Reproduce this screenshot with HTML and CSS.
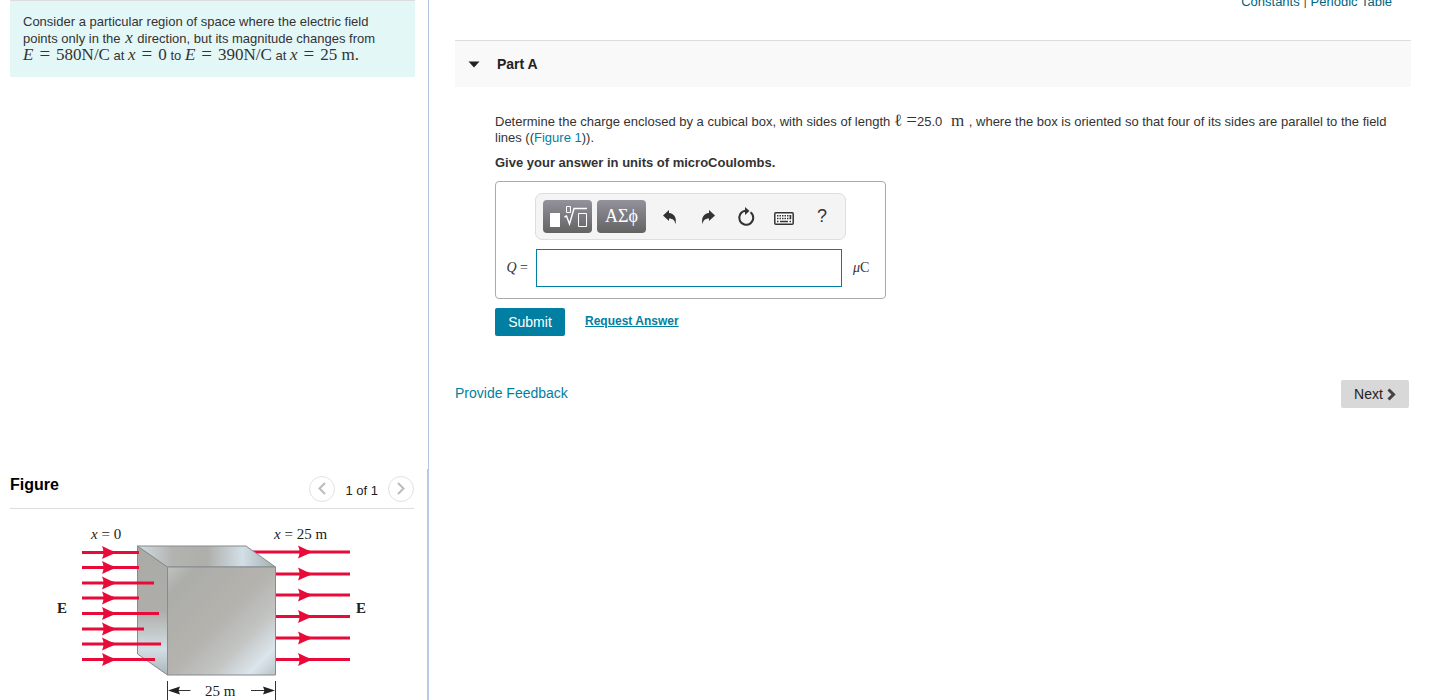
FILE: index.html
```html
<!DOCTYPE html>
<html lang="en">
<head>
<meta charset="utf-8">
<title>Part A</title>
<link rel="stylesheet" href="styles.css">
</head>
<body>
<div class="page">
  <aside class="side">
    <section class="intro-pane">
      <p class="intro">Consider a particular region of space where the electric field points only in the <span class="math var"><i>x</i></span> direction, but its magnitude changes from <span class="math"><i>E</i><span class="op">=</span>580N/C</span> at <span class="math"><i>x</i><span class="op">=</span>0</span> to <span class="math"><i>E</i><span class="op">=</span>390N/C</span> at <span class="math"><i>x</i><span class="op">=</span>25 m.</span></p>
    </section>
    <section class="figure-pane">
      <header class="figure-head">
        <h2 class="figure-title">Figure</h2>
        <nav class="pager">
          <button class="pager-btn" aria-label="Previous figure"><svg width="8" height="13" viewBox="0 0 8 13"><path d="M7 1L1.500 6.500L7 12"/></svg></button>
          <span class="pager-label">1 of 1</span>
          <button class="pager-btn" aria-label="Next figure"><svg width="8" height="13" viewBox="0 0 8 13"><path d="M1 1L6.500 6.500L1 12"/></svg></button>
        </nav>
      </header>
      <svg class="diagram" viewBox="10 509 404 202" role="img" aria-label="Cube in an electric field">
        <defs>
          <linearGradient id="front" x1="0" y1="0" x2="1" y2="1">
            <stop offset="0" stop-color="#c0c2c0"/><stop offset=".14" stop-color="#acada9"/><stop offset=".5" stop-color="#b5b3ae"/><stop offset=".7" stop-color="#c3c5c4"/><stop offset=".87" stop-color="#dce5eb"/><stop offset="1" stop-color="#b9c4c6"/>
          </linearGradient>
          <linearGradient id="top">
            <stop offset="0" stop-color="#d3dde2"/><stop offset=".25" stop-color="#b3b4b1"/><stop offset=".5" stop-color="#aeaeaa"/><stop offset=".76" stop-color="#d2dfe7"/><stop offset="1" stop-color="#a4afb0"/>
          </linearGradient>
          <linearGradient id="left" x1="0" y1="0" x2="0" y2="1">
            <stop offset="0" stop-color="#a9aaa6"/><stop offset=".5" stop-color="#aeada9"/><stop offset=".8" stop-color="#d3dfe5"/><stop offset="1" stop-color="#aab5b7"/>
          </linearGradient>
          <path id="head" d="M0-6.500Q9-2 15 0Q9 2 0 6.500Q3 0 0-6.500Z"/>
        </defs>
        <g class="field"><path d="M250 552H350"/></g>
        <g class="cube">
          <path fill="url(#left)" d="M137.500 546L167.500 567V675L137.500 654Z"/>
          <path fill="url(#top)" d="M137.500 546H246L275.500 567H167.500Z"/>
          <path fill="url(#front)" d="M167.500 567H275.500V675H167.500Z"/>
        </g>
        <g class="field">
          <path d="M82 552.500H139M82 567.500H139M82 583H154M82 598H139M82 613.500H159M82 629H144M82 644H161M82 659.500H155"/>
          <path d="M276 574H350M276 595H350M276 616.500H350M276 638H350M276 659.500H350"/>
        </g>
        <g fill="#e80a38">
          <use href="#head" x="102" y="552.500"/><use href="#head" x="102" y="567.500"/><use href="#head" x="102" y="583"/><use href="#head" x="102" y="598"/><use href="#head" x="102" y="613.500"/><use href="#head" x="102" y="629"/><use href="#head" x="102" y="644"/><use href="#head" x="102" y="659.500"/>
          <use href="#head" x="298" y="552"/><use href="#head" x="298" y="574"/><use href="#head" x="298" y="595"/><use href="#head" x="298" y="616.500"/><use href="#head" x="298" y="638"/><use href="#head" x="298" y="659.500"/>
        </g>
        <g stroke="#333"><path d="M167.500 681V705M275.500 681V705M176 690.500H190.500M251 690.500H266"/></g>
        <path fill="#222" d="M168 690.500L180 686.500L178.500 690.500L180 694.500ZM275 690.500L263 686.500L264.500 690.500L263 694.500Z"/>
        <g class="diagram-text">
          <text x="91" y="539"><tspan font-style="italic">x</tspan> = 0</text>
          <text x="274" y="539"><tspan font-style="italic">x</tspan> = 25 m</text>
          <text x="205" y="696">25 m</text>
          <text x="57" y="613" font-weight="bold">E</text>
          <text x="356" y="613" font-weight="bold">E</text>
        </g>
      </svg>
    </section>
  </aside>

  <main class="main">
    <div class="resources"><a href="#">Constants</a><span class="divider">|</span><a href="#">Periodic Table</a></div>
    <header class="part-head"><svg width="12" height="7" viewBox="0 0 12 7"><path fill="#222" d="M.5.5H11.500L6 6.500Z"/></svg><h1 class="part-title">Part A</h1></header>
    <div class="part-body">
      <p class="prompt">Determine the charge enclosed by a cubical box, with sides of length <span class="math">ℓ <span class="op-tight">=</span></span>25.0 <span class="math unit-m">m</span> , where the box is oriented so that four of its sides are parallel to the field lines ((<a href="#">Figure 1</a>)).</p>
      <p class="instruction">Give your answer in units of microCoulombs.</p>
      <form class="answer">
        <div class="toolbar">
          <button type="button" class="dark-btn" aria-label="Templates"><svg width="40" height="26" viewBox="0 0 40 26" fill="none" stroke="#fff"><path fill="#fff" stroke="none" d="M2 9H12V23H2Z"/><path d="M18.500 2.500H22.500V8.500H18.500ZM30.500 9.500H38.500V22.500H30.500Z"/><path stroke-width="1.400" d="M16.500 13L18.500 12L21.500 20L26 4.500H39"/></svg></button>
          <button type="button" class="dark-btn symbols">ΑΣϕ</button>
          <button type="button" class="icon-btn" aria-label="Undo"><svg width="16" height="16" viewBox="0 0 16 16"><path fill="#333" d="M1 6.500L7 1V4C12 4.500 15 8 13.500 15.500C13 11.500 11 9.500 7 9.500V12Z"/></svg></button>
          <button type="button" class="icon-btn" aria-label="Redo"><svg width="16" height="16" viewBox="0 0 16 16"><path fill="#333" d="M15 6.500L9 1V4C4 4.500 1 8 2.500 15.500C3 11.500 5 9.500 9 9.500V12Z"/></svg></button>
          <button type="button" class="icon-btn" aria-label="Reset"><svg width="20" height="20" viewBox="0 0 20 20"><path fill="none" stroke="#333" stroke-width="2" d="M14.500 5.200A7 7 0 1 1 9.500 3.800"/><path fill="#333" d="M9 0L13.500 4L9 8Z"/></svg></button>
          <button type="button" class="icon-btn" aria-label="Keyboard"><svg class="keyboard" width="20" height="13" viewBox="0 0 20 13"><rect x=".8" y=".8" width="18.400" height="11.400" rx="1" fill="#fff" stroke="#333" stroke-width="1.500"/><path stroke="#333" stroke-width="1.500" stroke-dasharray="1.500 1" d="M3 3.700H17M3 6.500H17"/><path stroke="#333" stroke-width="1.500" d="M3 9.500H4.500M6 9.500H14M15.500 9.500H17M16.500 3V7"/></svg></button>
          <button type="button" class="icon-btn help" aria-label="Help">?</button>
        </div>
        <label class="answer-label" for="charge"><i>Q</i> =</label>
        <input class="answer-input" id="charge" type="text">
        <span class="answer-unit"><i>μ</i>C</span>
      </form>
      <div class="actions"><button class="submit">Submit</button><a class="request" href="#">Request Answer</a></div>
    </div>
    <footer class="foot"><a class="feedback" href="#">Provide Feedback</a><button class="next">Next <svg width="9" height="13" viewBox="0 0 9 13"><path fill="none" stroke="#444" stroke-width="3" d="M1.500 1.500L6.500 6.500L1.500 11.500"/></svg></button></footer>
  </main>
</div>
</body>
</html>
```
FILE: styles.css
```css
* { box-sizing: border-box; }
body {
  margin: 0;
  color: #333;
  background: #fff;
  font: 13px/16px "Liberation Sans", Arial, sans-serif;
}
h1, h2, p { margin: 0; }
a { color: #007fa3; text-decoration: none; }
button { font-family: inherit; border: 0; padding: 0; cursor: pointer; }
svg { display: block; }
.page { display: flex; height: 100vh; overflow: hidden; }

.side { flex: 0 0 30%; display: flex; flex-direction: column; }
.intro-pane { flex: 67 0 0; min-height: 0; border-right: 1px solid #b0c6de; padding: 0 13px 0 10px; }
.intro {
  padding: 13px 36px 13px 13px;
  border-top: 1px solid #ddd;
  background: #e3f7f7;
}
.math { font-family: "Liberation Serif", serif; font-size: 17px; line-height: 12px; white-space: nowrap; }
.intro .math { line-height: 15px; }
.var { margin: 0 1px; }
.op { margin: 0 6px; font-size: 19px; line-height: 12px; }
.op-tight { font-size: 19px; }
.unit-m { margin: 0 1px 0 5px; }
.figure-pane {
  flex: 33 0 0;
  min-height: 0;
  overflow: hidden;
  border-right: 2px solid #b5cbe2;
  padding: 0 13px 0 10px;
}
.figure-head {
  display: flex;
  justify-content: space-between;
  align-items: center;
  height: 40px;
  border-bottom: 1px solid #ddd;
}
.figure-title { color: #000; font-size: 16px; line-height: 20px; padding-bottom: 8px; }
.pager { display: flex; align-items: center; gap: 10px; }
.pager-label { color: #222; padding-top: 4px; }
.pager-btn {
  display: grid;
  place-items: center;
  width: 26px;
  height: 26px;
  border: 1px solid #e2e2e2;
  border-radius: 50%;
  background: #fff;
}
.pager-btn path { fill: none; stroke: #bbb; stroke-width: 2; }
.diagram { width: 100%; }
.field { fill: none; stroke: #e80a38; stroke-width: 3; }
.cube { stroke: #858b8e; stroke-width: 1; stroke-linejoin: round; }
.diagram-text { font: 15px "Liberation Serif", serif; fill: #222; }

.main { flex: 1; min-width: 0; padding: 0 19px 0 26px; }
.resources {
  display: flex;
  justify-content: flex-end;
  align-items: flex-end;
  gap: 4px;
  height: 10px;
  padding-right: 19px;
}
.resources a { color: #00657f; }
.divider { font-size: 11px; }
.part-head {
  display: flex;
  align-items: center;
  gap: 17px;
  height: 47px;
  margin-top: 30px;
  padding-left: 13px;
  border-top: 1px solid #ddd;
  background: #f9f9f9;
}
.part-title { color: #222; font-size: 14px; line-height: 16px; }
.part-body { padding: 27px 20px 0 40px; }
.instruction { margin-top: 9px; font-weight: bold; }
.answer {
  display: grid;
  grid-template-columns: 32px 306px 30px;
  column-gap: 8px;
  align-items: center;
  width: fit-content;
  margin-top: 10px;
  padding: 11px 5px 11px 0;
  border: 1px solid #aaa;
  border-radius: 4px;
}
.toolbar {
  grid-column: 2 / 4;
  display: flex;
  align-items: center;
  width: 311px;
  height: 47px;
  margin: 0 0 9px -1px;
  padding-left: 7px;
  border: 1px solid #ddd;
  border-radius: 7px;
  background: #f4f4f4;
}
.dark-btn {
  display: grid;
  place-items: center;
  width: 49px;
  height: 33px;
  margin-right: 5px;
  border-radius: 4px;
  color: #fff;
  background: linear-gradient(#93919b, #636363);
}
.symbols { font: 18px "Liberation Serif", serif; }
.icon-btn { display: grid; place-items: center; width: 38px; height: 33px; background: none; color: #333; }
.keyboard { margin-top: 3px; }
.help { font-size: 18px; }
.answer-label { font: 14px "Liberation Serif", serif; text-align: right; white-space: nowrap; }
.answer-input { width: 100%; height: 38px; border: 1px solid #007fa3; background: #fff; font: inherit; padding: 0 8px; }
.answer-unit { padding-left: 3px; font: 14px "Liberation Serif", serif; }
.actions { display: flex; align-items: center; gap: 20px; margin-top: 9px; }
.submit { width: 70px; height: 28px; border-radius: 2px; background: #007fa3; color: #fff; font-size: 14px; }
.request { padding-bottom: 2px; font-size: 12px; font-weight: bold; text-decoration: underline; }
.foot { display: flex; justify-content: space-between; align-items: center; margin: 44px 2px 0 0; font-size: 14px; }
.feedback { padding-bottom: 2px; }
.next {
  display: flex;
  align-items: center;
  justify-content: center;
  gap: 4px;
  width: 68px;
  height: 28px;
  border-radius: 2px;
  color: #222;
  background: #d8d8d8;
  font-size: 14px;
}
```
